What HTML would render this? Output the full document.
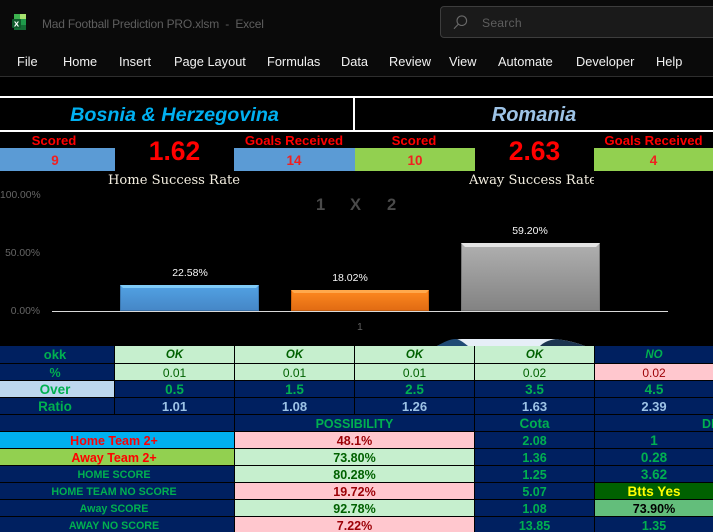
<!DOCTYPE html>
<html><head><meta charset="utf-8">
<style>
*{box-sizing:border-box;margin:0;padding:0}
html,body{width:713px;height:532px;overflow:hidden;background:#000}
body{position:relative;font-family:"Liberation Sans",sans-serif}
.a{position:absolute;white-space:nowrap}
.rb{top:54px;font-size:12.8px;color:#f2f2f2;line-height:16px}
.b{font-weight:bold}
.lab{font-weight:bold;color:#f00;font-size:13.2px;line-height:16px;text-align:center;top:133px}
.bar{top:148px;height:23px;color:#f02020;font-weight:bold;font-size:13.5px;line-height:25px;text-align:center}
.big{top:134px;width:119px;text-align:center;color:#f00;font-weight:bold;font-size:26.5px;line-height:34px}
.ax{font-size:10.3px;color:#666;text-align:right;width:40px;left:0;line-height:12px}
.dl{font-size:10.5px;color:#f7f7f7;line-height:12px;text-align:center;width:60px}
.ser{top:173px;font-family:"DejaVu Serif","Liberation Serif",serif;font-size:13.1px;line-height:16px;color:#f3eee0}
.g{position:absolute;left:0;top:346px;width:713px;height:186px;overflow:hidden;display:grid;grid-template-columns:114px 119px 119px 119px 119px 118px;grid-template-rows:17px repeat(10,16px);gap:1px;background:#000}
.g div{text-align:center;font-weight:bold;font-size:12.5px;line-height:18px;white-space:nowrap;overflow:hidden}
.n{background:#002060;color:#00b050}
.v{background:#002060;color:#9dc3e6;font-size:13px!important}
.ok{background:#c6efce;color:#006100}
.no{background:#ffc7ce;color:#9c0006}
.i{font-style:italic;font-size:11.5px!important}
.r{font-weight:normal!important;font-size:12px!important}
.s{grid-column:span 2}
.sm{font-size:10.7px!important}
.p{padding-right:6px}
.q{padding-right:4px}
</style></head><body>

<div class="a" style="left:0;top:0;width:713px;height:76px;background:#0a0a0a"></div>
<div class="a" style="left:0;top:76px;width:713px;height:1px;background:#2e2e2e"></div>

<svg class="a" style="left:11px;top:13px" width="16" height="18" viewBox="0 0 16 18">
<rect x="3" y="1" width="12" height="16" rx="1" fill="#1f7a3c"/>
<rect x="9" y="1" width="6" height="5" fill="#a6e26f"/>
<rect x="3" y="1" width="6" height="5" fill="#3db34f"/>
<rect x="9" y="6" width="6" height="6" fill="#1f9a4b"/>
<rect x="3" y="12" width="12" height="5" fill="#146c35"/>
<rect x="1" y="6" width="9" height="9" rx="1" fill="#0f5a2c"/>
<text x="5.5" y="13.5" font-family="Liberation Sans" font-size="9.5" font-weight="bold" fill="#fff" text-anchor="middle">x</text>
</svg>

<div class="a" style="left:42px;top:16px;font-size:12px;line-height:16px;color:#5e5e5e;letter-spacing:-.2px">Mad Football Prediction PRO.xlsm&nbsp; -&nbsp; Excel</div>

<div class="a" style="left:440px;top:6px;width:300px;height:32px;background:#1a1a1a;border:1px solid #3d3d3d;border-radius:4px"></div>
<svg class="a" style="left:453px;top:13px" width="18" height="18" viewBox="0 0 18 18" fill="none" stroke="#6a6a6a" stroke-width="1.1">
<circle cx="8.8" cy="7.7" r="4.8"/><path d="M5.4 11.1 1 15.7"/>
</svg>
<div class="a" style="left:482px;top:15px;font-size:12.2px;line-height:16px;color:#5e5e5e;letter-spacing:.2px">Search</div>

<div class="a rb" style="left:17px">File</div>
<div class="a rb" style="left:63px">Home</div>
<div class="a rb" style="left:119px">Insert</div>
<div class="a rb" style="left:174px">Page Layout</div>
<div class="a rb" style="left:267px">Formulas</div>
<div class="a rb" style="left:341px">Data</div>
<div class="a rb" style="left:389px">Review</div>
<div class="a rb" style="left:449px">View</div>
<div class="a rb" style="left:498px">Automate</div>
<div class="a rb" style="left:576px">Developer</div>
<div class="a rb" style="left:656px">Help</div>

<div class="a" style="left:0;top:96px;width:713px;height:2px;background:#fff"></div>
<div class="a" style="left:0;top:130px;width:713px;height:2px;background:#fff"></div>
<div class="a" style="left:353px;top:96px;width:2px;height:36px;background:#fff"></div>
<div class="a b" style="left:0;top:104px;width:349px;text-align:center;font-style:italic;font-size:19.8px;line-height:22px;color:#00b0f0">Bosnia &amp; Herzegovina</div>
<div class="a b" style="left:355px;top:104px;width:358px;text-align:center;font-style:italic;font-size:20px;line-height:22px;color:#9dc3e6">Romania</div>

<div class="a lab" style="left:0;width:108px">Scored</div>
<div class="a lab" style="left:234px;width:120px">Goals Received</div>
<div class="a lab" style="left:354px;width:120px">Scored</div>
<div class="a lab" style="left:594px;width:119px">Goals Received</div>

<div class="a bar" style="left:0;width:115px;background:#5b9bd5;padding-right:5px">9</div>
<div class="a bar" style="left:234px;width:120px;background:#5b9bd5">14</div>
<div class="a bar" style="left:354px;width:1px;background:#5b9bd5"></div>
<div class="a bar" style="left:355px;width:120px;background:#92d050">10</div>
<div class="a bar" style="left:594px;width:119px;background:#92d050">4</div>
<div class="a big" style="left:115px">1.62</div>
<div class="a big" style="left:475px">2.63</div>

<div class="a ser" style="left:108px">Home Success Rate</div>
<div class="a ser" style="left:469px;width:125px;overflow:hidden">Away Success Rate</div>

<div class="a ax" style="top:190px">100.00%</div>
<div class="a ax" style="top:248px">50.00%</div>
<div class="a ax" style="top:306px">0.00%</div>

<div class="a b" style="left:316px;top:195px;font-size:16.5px;line-height:20px;color:#4a4a4a">1</div>
<div class="a b" style="left:350px;top:195px;font-size:16.5px;line-height:20px;color:#4a4a4a">X</div>
<div class="a b" style="left:387px;top:195px;font-size:16.5px;line-height:20px;color:#4a4a4a">2</div>

<div class="a" style="left:52px;top:311px;width:616px;height:1px;background:#d9d9d9"></div>

<svg class="a" style="left:120px;top:285px" width="139" height="26" viewBox="0 0 139 26">
<defs>
<linearGradient id="gb" x1="0" y1="0" x2="0" y2="1"><stop offset="0" stop-color="#52a2e4"/><stop offset="1" stop-color="#4586c6"/></linearGradient>
<linearGradient id="go" x1="0" y1="0" x2="0" y2="1"><stop offset="0" stop-color="#ff8a20"/><stop offset="1" stop-color="#e06a12"/></linearGradient>
<linearGradient id="gg" x1="0" y1="0" x2="0" y2="1"><stop offset="0" stop-color="#b0b0b0"/><stop offset="1" stop-color="#828282"/></linearGradient>
</defs>
<rect width="139" height="26" fill="url(#gb)"/>
<path d="M0 0H139L136 3H3Z" fill="#7fcbf8"/>
<path d="M0 0 1 1V26H0Z M139 0 138 1V26H139Z" fill="#3d78b0"/>
<rect y="25" width="139" height="1" fill="#3a70a5"/>
</svg>
<svg class="a" style="left:291px;top:290px" width="138" height="21" viewBox="0 0 138 21">
<rect width="138" height="21" fill="url(#go)"/>
<path d="M0 0H138L135 3H3Z" fill="#ffa94d"/>
<path d="M0 0 1 1V21H0Z M138 0 137 1V21H138Z" fill="#d0640f"/>
<rect y="20" width="138" height="1" fill="#c05c10"/>
</svg>
<svg class="a" style="left:461px;top:243px" width="139" height="68" viewBox="0 0 139 68">
<rect width="139" height="68" fill="url(#gg)"/>
<path d="M0 0H139L135 4H4Z" fill="#e4e4e4"/>
<path d="M0 0 1 1V68H0Z M139 0 138 1V68H139Z" fill="#777"/>
<rect y="67" width="139" height="1" fill="#707070"/>
</svg>

<div class="a dl" style="left:160px;top:267px">22.58%</div>
<div class="a dl" style="left:320px;top:272px">18.02%</div>
<div class="a dl" style="left:500px;top:225px">59.20%</div>
<div class="a" style="left:357px;top:321px;font-size:10.5px;line-height:12px;color:#5f5f5f">1</div>

<svg class="a" style="left:430px;top:338px" width="170" height="8" viewBox="0 0 170 8">
<path d="M7 8C17 3 25 1 32 1H125C137 2 147 5 155 8Z" fill="#e6eef7"/>
<path d="M7 8C14 4 20 1 26 1C31 2 34 5 38 8Z" fill="#1f4a75"/>
<path d="M110 8C113 5 118 2 126 1C136 2 147 5 155 8Z" fill="#1c3550"/>
</svg>

<div class="g">
<div class="n q" style="font-size:13px">okk</div><div class="ok i">OK</div><div class="ok i">OK</div><div class="ok i">OK</div><div class="ok i">OK</div><div class="n i">NO</div>
<div class="n q">%</div><div class="ok r">0.01</div><div class="ok r">0.01</div><div class="ok r">0.01</div><div class="ok r">0.02</div><div class="no r">0.02</div>
<div class="q" style="background:#bdd7ee;color:#00b050;font-size:13.5px">Over</div><div class="n" style="font-size:13.5px">0.5</div><div class="n" style="font-size:13.5px">1.5</div><div class="n" style="font-size:13.5px">2.5</div><div class="n" style="font-size:13.5px">3.5</div><div class="n" style="font-size:13.5px">4.5</div>
<div class="n q" style="font-size:13.5px">Ratio</div><div class="v">1.01</div><div class="v">1.08</div><div class="v">1.26</div><div class="v">1.63</div><div class="v">2.39</div>
<div class="n s"></div><div class="n s">POSSIBILITY</div><div class="n" style="font-size:13.5px">Cota</div><div class="n" style="text-align:left;padding-left:107px">DI</div>
<div class="s p" style="background:#00b0f0;color:#f00">Home Team 2+</div><div class="no s">48.1%</div><div class="n">2.08</div><div class="n" style="font-size:13.5px">1</div>
<div class="s p" style="background:#92d050;color:#f00">Away Team 2+</div><div class="ok s">73.80%</div><div class="n">1.36</div><div class="n" style="font-size:13.5px">0.28</div>
<div class="n s sm p">HOME SCORE</div><div class="ok s">80.28%</div><div class="n">1.25</div><div class="n" style="font-size:13.5px">3.62</div>
<div class="n s sm p">HOME TEAM NO SCORE</div><div class="no s">19.72%</div><div class="n">5.07</div><div style="background:#006100;color:#ff0;font-size:13.5px">Btts Yes</div>
<div class="n s sm p">Away SCORE</div><div class="ok s">92.78%</div><div class="n">1.08</div><div style="background:#63be7b;color:#000">73.90%</div>
<div class="n s sm p">AWAY NO SCORE</div><div class="no s">7.22%</div><div class="n">13.85</div><div class="n">1.35</div>
</div>

</body></html>
